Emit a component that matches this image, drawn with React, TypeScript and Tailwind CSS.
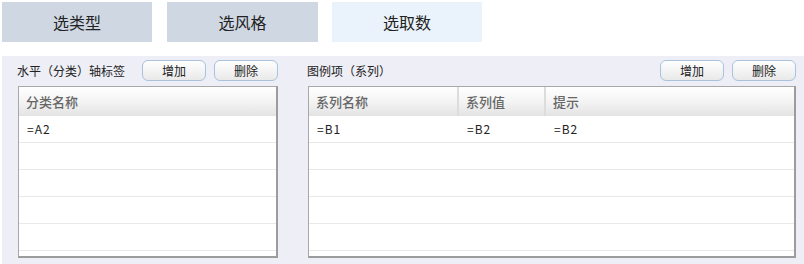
import React from 'react';

const font = { fontFamily: '"Noto Sans CJK SC", "Microsoft YaHei", sans-serif' };

type Col = { title: string; width?: string; value: string };

const SmallButton: React.FC<{ label: string }> = ({ label }) => (
  <button className="w-[64px] h-[21px] rounded-[6px] border border-[#a9c3dd] bg-gradient-to-b from-white to-[#e9e9e9] text-[12px] leading-none text-[#222]">
    {label}
  </button>
);

const Grid: React.FC<{ cols: Col[] }> = ({ cols }) => {
  const emptyRows = [1, 2, 3, 4, 5];
  return (
    <div className="h-[172px] overflow-hidden bg-white border-l border-t border-[#a8a8a8] border-r-2 border-b-2 border-r-[#9c9c9c] border-b-[#9c9c9c]">
      <div className="flex h-[29px] bg-gradient-to-b from-white via-[#f4f4f4] to-[#e3e3e3]">
        {cols.map((c, i) => (
          <div
            key={c.title}
            className={`${c.width ?? 'flex-1'} flex items-center pl-[7px] text-[13px] text-[#666] font-medium ${
              i < cols.length - 1 ? 'border-r-2 border-[#dcdcdc]' : ''
            }`}
          >
            {c.title}
          </div>
        ))}
      </div>
      <div className="flex h-[27px] border-b border-[#e8e8e8]">
        {cols.map((c) => (
          <div key={c.title} className={`${c.width ?? 'flex-1'} flex items-center pl-[8px] text-[12px] tracking-[1px] text-[#222]`}>
            {c.value}
          </div>
        ))}
      </div>
      {emptyRows.map((r) => (
        <div key={r} className="h-[27px] border-b border-[#e8e8e8]" />
      ))}
    </div>
  );
};

export default function App() {
  const tabs = [
    { label: '选类型', cls: 'w-[150px] bg-[#cfd7e3]' },
    { label: '选风格', cls: 'w-[151px] bg-[#cfd7e3] ml-[15px]' },
    { label: '选取数', cls: 'w-[150px] bg-[#eaf2fb] ml-[14px]' },
  ];

  return (
    <div className="w-[804px] h-[264px] bg-white overflow-hidden" style={font}>
      <div className="flex pt-[2px] pl-[2px]">
        {tabs.map((t) => (
          <div key={t.label} className={`${t.cls} h-[40px] flex items-center justify-center text-[16px] text-[#222]`}>
            {t.label}
          </div>
        ))}
      </div>

      <div className="mt-[14px] ml-[2px] w-[802px] h-[208px] bg-[#eeeef6] flex pt-[4px] pl-[15px] pr-[8px]">
        <div className="w-[261px]">
          <div className="flex items-center h-[21px]">
            <span className="text-[12px] text-[#222]">水平（分类）轴标签</span>
            <div className="ml-auto flex gap-[8px]">
              <SmallButton label="增加" />
              <SmallButton label="删除" />
            </div>
          </div>
          <div className="mt-[5px] pl-[1px]">
            <Grid cols={[{ title: '分类名称', value: '=A2' }]} />
          </div>
        </div>

        <div className="ml-[30px] flex-1">
          <div className="flex items-center h-[21px]">
            <span className="text-[12px] text-[#222] -ml-[1px]">图例项（系列）</span>
            <div className="ml-auto flex gap-[8px]">
              <SmallButton label="增加" />
              <SmallButton label="删除" />
            </div>
          </div>
          <div className="mt-[5px]">
            <Grid
              cols={[
                { title: '系列名称', width: 'w-[150px]', value: '=B1' },
                { title: '系列值', width: 'w-[87px]', value: '=B2' },
                { title: '提示', value: '=B2' },
              ]}
            />
          </div>
        </div>
      </div>
    </div>
  );
}
